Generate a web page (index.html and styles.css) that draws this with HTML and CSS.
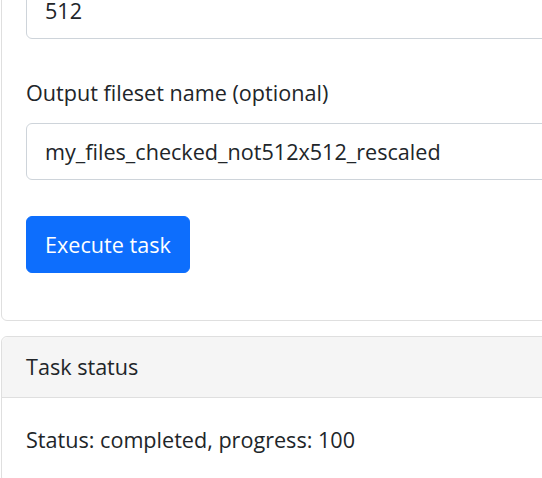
FILE: index.html
```html
<!DOCTYPE html>
<html lang="en">
<head>
<meta charset="utf-8">
<title>Task</title>
<link rel="stylesheet" href="styles.css">
</head>
<body>
<div class="page">
  <div class="card">
    <div class="card-body">
      <div class="field field-first">
        <input class="form-control" type="text" value="512">
      </div>
      <div class="field">
        <label class="form-label">Output fileset name (optional)</label>
        <input class="form-control" type="text" value="my_files_checked_not512x512_rescaled">
      </div>
      <button class="btn-primary" type="button">Execute task</button>
    </div>
  </div>
  <div class="card card-status">
    <div class="card-header">Task status</div>
    <div class="card-body">
      <p class="status">Status: completed, progress: 100</p>
    </div>
  </div>
</div>
</body>
</html>
```

FILE: styles.css
```css
html, body {
  margin: 0;
  padding: 0;
  overflow: hidden;
  background: #fff;
}
body {
  font-family: "Open Sans", "Noto Sans", sans-serif;
  font-size: 21.6px;
  line-height: 36px;
  color: #212529;
}
.page {
  width: 800px;
  margin-top: -43px;
  padding-left: 1px;
}
.card {
  border: 1px solid #dfdfdf;
  border-radius: 6px;
  background: #fff;
}
.card-body {
  padding: 24px;
}
.field {
  margin-bottom: 36px;
}
.form-label {
  display: block;
  margin-bottom: 12px;
}
.form-control {
  display: block;
  box-sizing: border-box;
  width: 100%;
  height: 57px;
  padding: 9px 18px;
  font: inherit;
  color: #212529;
  border: 1px solid #ced4da;
  border-radius: 6px;
  background: #fff;
}
.btn-primary {
  display: block;
  height: 57px;
  padding: 9px 18px;
  font: inherit;
  color: #fff;
  background: #0d6efd;
  border: 1px solid #0d6efd;
  border-radius: 6px;
  margin-bottom: 23px;
}
.card-status {
  margin-top: 15px;
}
.card-header {
  padding: 12px 24px;
  background: #f5f5f5;
  border-bottom: 1px solid #dfdfdf;
  border-radius: 6px 6px 0 0;
}
.status {
  margin: 0;
}
```
